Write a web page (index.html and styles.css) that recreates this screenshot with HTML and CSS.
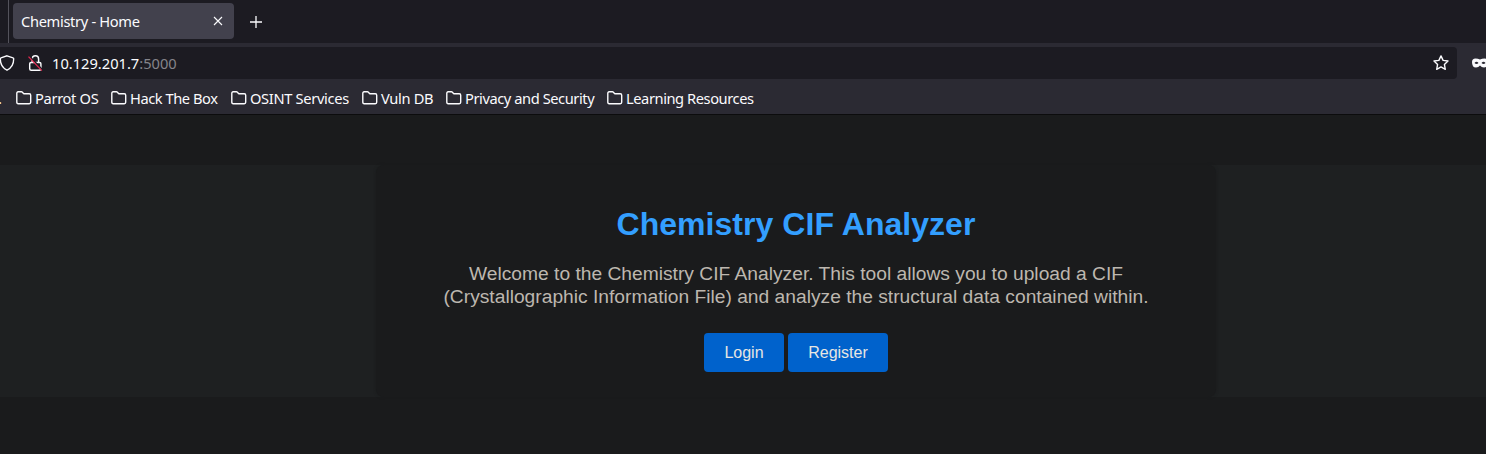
FILE: index.html
```html
<!DOCTYPE html>
<html lang="en">
<head>
<meta charset="utf-8">
<title>Chemistry - Home</title>
<link rel="stylesheet" href="styles.css">
</head>
<body>
<svg class="defs" width="0" height="0"><symbol id="folder" viewBox="0 0 16 14"><path d="M.8 11.3V2.2Q.8.8 2.2.8h3.200q.6 0 1 .4l1.100 1.200q.4.4 1 .4h4.800q1.400 0 1.400 1.400v7.100q0 1.400-1.400 1.400H2.200Q.8 12.700.8 11.300z" fill="none" stroke="#fbfbfe" stroke-width="1.400"/></symbol></svg>
<div class="tabs">
  <div class="tab"><span class="tab-title">Chemistry - Home</span>
    <svg width="10" height="10" viewBox="0 0 10 10"><path d="M1 1l8 8M9 1L1 9" stroke="#fbfbfe" stroke-width="1.1"/></svg>
  </div>
  <svg class="plus" width="12" height="12" viewBox="0 0 12 12"><path d="M6 0v12M0 6h12" stroke="#fbfbfe" stroke-width="1.3"/></svg>
</div>
<div class="toolbar">
  <div class="address">
    <svg class="shield" width="15" height="16" viewBox="0 0 15 16"><path d="M7 .8l6 2.1q.7.2.7.9c0 5.300-1.600 9-6.700 11.400C1.900 12.800.3 9.100.3 3.800q0-.7.7-.9z" fill="none" stroke="#fbfbfe" stroke-width="1.350"/></svg>
    <svg class="lock" width="15" height="17" viewBox="0 0 15 17"><path d="M4.200 7.500V4a3.200 3.200 0 0 1 6.400 0v3.500M3.200 7.500h8.400q1.300 0 1.300 1.300v5q0 1.500-1.500 1.500H3.200q-1.500 0-1.500-1.500v-5q0-1.300 1.500-1.300z" fill="none" stroke="#fbfbfe" stroke-width="1.450"/><path d="M1.700 1.200l13.200 14" stroke="#1c1b22" stroke-width="1.300"/><path d="M.5 1.600l13.300 14" stroke="#e22850" stroke-width="1.300"/></svg>
    <span class="url">10.129.201.7<span class="port">:5000</span></span>
    <svg class="star" width="16" height="16" viewBox="0 0 16 16"><path d="M8 .9l2.100 4.500 4.900.6-3.600 3.400.9 4.900L8 11.900l-4.300 2.400.9-4.900L1 6l4.900-.6z" fill="none" stroke="#fbfbfe" stroke-width="1.400" stroke-linejoin="round"/></svg>
  </div>
  <svg class="mask" width="14" height="10" viewBox="0 0 14 10"><path fill-rule="evenodd" d="M0 4Q0 .5 3.500.5 6 .5 8 1.500 10 .5 12.500.5 16 .5 16 4q0 5.500-4 5.500-2.500 0-4-2-1.500 2-4 2-4 0-4-5.500zm2.500 1q2 2 4 0-2-2.500-4 0zm7 0q2 2 4 0-2-2.500-4 0z" fill="#fbfbfe"/></svg>
</div>
<div class="bookmarks">
  <span class="more">.</span>
  <div class="bm w1"><svg class="folder"><use href="#folder"/></svg><span>Parrot OS</span></div>
  <div class="bm w2"><svg class="folder"><use href="#folder"/></svg><span>Hack The Box</span></div>
  <div class="bm w3"><svg class="folder"><use href="#folder"/></svg><span>OSINT Services</span></div>
  <div class="bm w4"><svg class="folder"><use href="#folder"/></svg><span>Vuln DB</span></div>
  <div class="bm w5"><svg class="folder"><use href="#folder"/></svg><span>Privacy and Security</span></div>
  <div class="bm w6"><svg class="folder"><use href="#folder"/></svg><span>Learning Resources</span></div>
</div>
<main class="page">
  <div class="band">
    <section class="card">
      <h1>Chemistry CIF Analyzer</h1>
      <p>Welcome to the Chemistry CIF Analyzer. This tool allows you to upload a CIF (Crystallographic Information File) and analyze the structural data contained within.</p>
      <div class="actions"><a class="btn login">Login</a><a class="btn register">Register</a></div>
    </section>
  </div>
</main>
</body>
</html>
```
FILE: styles.css
```css
* { box-sizing: border-box; }
body { margin: 0; height: 454px; overflow: hidden; background: #1a1b1c; font: 14.67px/20px "Noto Sans", sans-serif; color: #fbfbfe; white-space: nowrap; }
svg { display: block; flex: none; }
.defs { position: absolute; }
.tabs { height: 43px; background: #1c1b22; display: flex; align-items: flex-start; }
.tabs::before { content: ""; width: 9px; height: 43px; border-right: 1px solid #54535c; }
.tab { width: 221px; height: 36px; margin: 3px 0 0 4px; padding: 0 11px 0 8px; border-radius: 4px; background: #42414d; display: flex; align-items: center; justify-content: space-between; }
.tabs { margin-left: -1px; padding-left: 1px; }
.tabs::before { margin-left: -1px; }
.tab { margin-left: 4px; }
.tab-title { letter-spacing: -.33px; }
.plus { margin: 16px 0 0 16px; }
.toolbar { height: 40px; background: #2b2a33; display: flex; padding-top: 4px; }
.address { width: 1457px; height: 32px; background: #1c1b22; border-radius: 0 4px 4px 0; display: flex; align-items: center; }
.lock { margin-left: 13px; }
.url { margin-left: 9px; letter-spacing: 0; }
.port { color: #85848b; }
.star { margin-left: auto; margin-right: 8px; }
.mask { margin: 11px 0 0 15px; }
.bookmarks { height: 32px; background: #2b2a33; border-bottom: 1px solid #0c0c0d; display: flex; align-items: center; padding-bottom: 1px; }
.more { width: 16px; text-indent: -2px; }
.bm { display: flex; align-items: center; gap: 3px; }
.folder { width: 16px; height: 14px; }
.bm span { letter-spacing: -.33px; }
.w1 { width: 95px; }
.w2 { width: 120px; }
.w3 { width: 131px; }
.w4 { width: 84px; }
.w5 { width: 161px; }
.w2 span { letter-spacing: -.45px; }
.w5 span, .w6 span { letter-spacing: -.43px; }
.page { padding-top: 50px; font-family: "Liberation Sans", sans-serif; }
.band { height: 232px; background: #1e2021; padding-left: 376px; }
.card { width: 840px; height: 232px; border-radius: 8px; background: #1a1b1c; box-shadow: 0 0 3px #1a1b1c; padding: 41px 40px 0; text-align: center; white-space: normal; }
h1 { margin: 0; font-size: 32px; line-height: 37px; letter-spacing: .04px; color: #339fff; }
p { margin: 19px 0 0; font-size: 19.23px; line-height: 23px; color: #bdb7af; }
.actions { margin-top: 25px; display: flex; justify-content: center; gap: 4px; }
.btn { height: 39px; border-radius: 4px; background: #0062cc; color: #e8e6e3; font-size: 16px; line-height: 39px; }
.login { width: 80px; }
.register { width: 100px; }
```
